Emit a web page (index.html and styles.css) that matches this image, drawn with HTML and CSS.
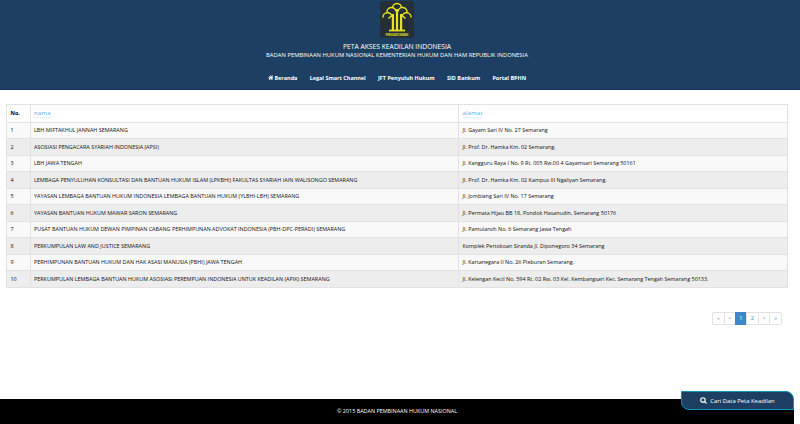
FILE: index.html
```html
<!DOCTYPE html>
<html lang="id">
<head>
<meta charset="utf-8">
<title>Peta Akses Keadilan Indonesia</title>
<link rel="stylesheet" href="styles.css">
</head>
<body>
<header class="header">
  <svg class="logo" viewBox="0 0 34 37">
    <rect width="34" height="37" rx="3" fill="#252f38"/>
    <g fill="none" stroke="#e6e31e" stroke-width="1.500">
      <path d="M12.500 7a4.500 4.500 0 0 1 9 0"/>
      <path d="M7 11.500a4.500 4.500 0 0 1 9-1M27 11.500a4.500 4.500 0 0 0-9-1"/>
      <path d="M3 16.500a4.500 4.500 0 0 1 9-.5M31 16.500a4.500 4.500 0 0 0-9-.5"/>
      <path d="M8.500 17.500l4.500-4M25.500 17.500l-4.500-4"/>
      <path stroke-width="2.200" d="M17 8v21M12.900 13v16M21.100 13v16"/>
      <path stroke-width="1.800" d="M9 29.500h16"/>
    </g>
    <text x="17" y="35" text-anchor="middle" textLength="23" class="logo-text">PENGAYOMAN</text>
  </svg>
  <h1 class="title">PETA AKSES KEADILAN INDONESIA</h1>
  <p class="subtitle">BADAN PEMBINAAN HUKUM NASIONAL KEMENTERIAN HUKUM DAN HAM REPUBLIK INDONESIA</p>
  <nav class="nav">
    <a><svg class="home" viewBox="0 0 12 10"><path d="M6 0L0 5.300l.8.900L6 1.800l5.200 4.400.8-.9-1.800-1.600V.8H8.600v1.500zM6 2.700L2 6v4h3V7h2v3h3V6z"/></svg>Beranda</a>
    <a>Legal Smart Channel</a><a>JFT Penyuluh Hukum</a><a>SID Bankum</a><a>Portal BPHN</a>
  </nav>
</header>
<main class="main">
  <table class="table">
    <colgroup><col class="c-no"><col class="c-name"><col></colgroup>
    <thead><tr><th>No.</th><th><a class="sort">nama</a></th><th><a class="sort">alamat</a></th></tr></thead>
    <tbody>
      <tr><td>1</td><td>LBH MIFTAKHUL JANNAH SEMARANG</td><td>Jl. Gayam Sari IV No. 27 Semarang</td></tr>
      <tr><td>2</td><td>ASOSIASI PENGACARA SYARIAH INDONESIA (APSI)</td><td>Jl. Prof. Dr. Hamka Km. 02 Semarang.</td></tr>
      <tr><td>3</td><td>LBH JAWA TENGAH</td><td>Jl. Kangguru Raya I No. 9 Rt. 005 Rw.00 4 Gayamsari Semarang 50161</td></tr>
      <tr><td>4</td><td>LEMBAGA PENYULUHAN KONSULTASI DAN BANTUAN HUKUM ISLAM (LPKBHI) FAKULTAS SYARIAH IAIN WALISONGO SEMARANG</td><td>Jl. Prof. Dr. Hamka Km. 02 Kampus III Ngaliyan Semarang.</td></tr>
      <tr><td>5</td><td>YAYASAN LEMBAGA BANTUAN HUKUM INDONESIA LEMBAGA BANTUAN HUKUM (YLBHI-LBH) SEMARANG</td><td>Jl. Jomblang Sari IV No. 17 Semarang</td></tr>
      <tr><td>6</td><td>YAYASAN BANTUAN HUKUM MAWAR SARON SEMARANG</td><td>Jl. Permata Hijau BB 18, Pondok Hasanudin, Semarang 50176</td></tr>
      <tr><td>7</td><td>PUSAT BANTUAN HUKUM DEWAN PIMPINAN CABANG PERHIMPUNAN ADVOKAT INDONESIA (PBH-DPC-PERADI) SEMARANG</td><td>Jl. Pamularsih No. 6 Semarang Jawa Tengah</td></tr>
      <tr><td>8</td><td>PERKUMPULAN LAW AND JUSTICE SEMARANG</td><td>Komplek Pertokoan Siranda Jl. Diponegoro 34 Semarang</td></tr>
      <tr><td>9</td><td>PERHIMPUNAN BANTUAN HUKUM DAN HAK ASASI MANUSIA (PBHI) JAWA TENGAH</td><td>Jl. Kartanegara II No. 26 Pleburan Semarang.</td></tr>
      <tr><td>10</td><td>PERKUMPULAN LEMBAGA BANTUAN HUKUM ASOSIASI PEREMPUAN INDONESIA UNTUK KEADILAN (APIK) SEMARANG</td><td>Jl. Kelengan Kecil No. 594 Rt. 02 Rw. 03 Kel. Kembangsari Kec. Semarang Tengah Semarang 50133.</td></tr>
    </tbody>
  </table>
  <div class="pager"><span class="off">«</span><span class="off">&lt;</span><span class="on">1</span><span>2</span><span>&gt;</span><span>»</span></div>
</main>
<footer class="footer">© 2015 BADAN PEMBINAAN HUKUM NASIONAL</footer>
<div class="search"><svg class="glass" viewBox="0 0 10 10"><circle cx="4.200" cy="4.200" r="3.200"/><path d="M6.600 6.600l2.700 2.700"/></svg>Cari Data Peta Keadilan</div>
</body>
</html>
```
FILE: styles.css
```css
* { box-sizing: border-box; }
body {
  margin: 0;
  height: 424px;
  overflow: hidden;
  display: flex;
  flex-direction: column;
  background: #fff;
  color: #111;
  font: 5.430px/8px "Open Sans", sans-serif;
}
.header {
  height: 90px;
  padding: 1px 6px 0 0;
  display: flex;
  flex-direction: column;
  align-items: center;
  background: #1d3f63;
  border-bottom: 1px solid #12305a;
  color: #fff;
}
.logo { width: 34px; height: 37px; }
.logo-text { font: 700 3.600px "Open Sans", sans-serif; fill: #d6d32a; }
.title { margin: 4px 0 0; font-size: 6.750px; line-height: 9px; font-weight: 400; }
.subtitle { margin: 0; font-size: 5.850px; line-height: 8px; }
.nav { display: flex; gap: 12.300px; margin-top: 15px; font-size: 5.460px; font-weight: 700; }
.home { width: 5.500px; height: 5px; margin-right: 1px; fill: #fff; }
.main { flex: 1; padding: 14px 12px 0 6px; }
.table { width: 100%; table-layout: fixed; border-collapse: collapse; border: 1px solid #e2e2e2; }
.c-no { width: 23.500px; }
.c-name { width: 428.500px; }
th, td { padding: 0 4px 0 3.500px; border: 1px solid #e2e2e2; text-align: left; white-space: nowrap; }
th { height: 17.500px; color: #000; }
td { height: 16.500px; }
tbody tr { background: #f9f9f9; }
tbody tr:nth-child(even) { background: #ededed; }
.sort { color: #5cace0; border-bottom: 1px dotted #d5eaf7; font-weight: 400; font-size: 6px; letter-spacing: .2px; }
.pager { display: flex; width: 70px; height: 13px; margin: 24px 6px 0 auto; border: 1px solid #e2e2e2; border-radius: 2px; color: #2f7fc4; }
.pager span { flex: 1; text-align: center; line-height: 11px; border-right: 1px solid #e2e2e2; }
.pager span:last-child { border-right: 0; }
.pager .off { color: #888; }
.pager .on { margin: -1px 0 -1px -1px; line-height: 13px; background: #3d88ca; color: #fff; }
.footer { width: 794px; height: 25px; padding-top: 8px; background: #000; color: #fff; text-align: center; }
.search {
  position: absolute;
  right: 6px;
  top: 391px;
  width: 113px;
  height: 19px;
  display: flex;
  align-items: center;
  justify-content: center;
  gap: 3px;
  background: #1d3f63;
  border: 1px solid #1193b5;
  border-radius: 0 8px 0 8px;
  color: #fff;
  font-size: 5.900px;
}
.glass { width: 7px; height: 7px; fill: none; stroke: #fff; stroke-width: 1.600; }
```
